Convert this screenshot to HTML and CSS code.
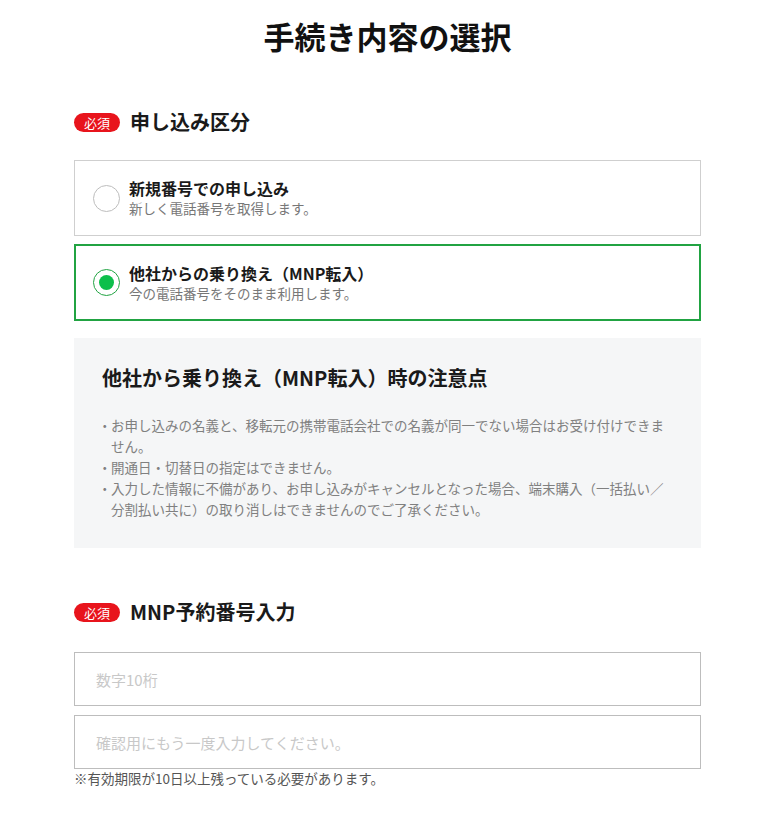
FILE: index.html
```html
<!DOCTYPE html>
<html lang="ja">
<head>
<meta charset="utf-8">
<title>手続き内容の選択</title>
<link rel="stylesheet" href="styles.css">
</head>
<body>
<main class="page">
  <h1 class="page-title">手続き内容の選択</h1>

  <section class="section">
    <h2 class="section-head"><span class="badge">必須</span><span class="section-title">申し込み区分</span></h2>
    <div class="options">
      <label class="option">
        <span class="radio"></span>
        <span class="option-text">
          <span class="option-title">新規番号での申し込み</span>
          <span class="option-sub">新しく電話番号を取得します。</span>
        </span>
      </label>
      <label class="option option-checked">
        <span class="radio radio-checked"><span class="radio-dot"></span></span>
        <span class="option-text">
          <span class="option-title">他社からの乗り換え（MNP転入）</span>
          <span class="option-sub">今の電話番号をそのまま利用します。</span>
        </span>
      </label>
    </div>
    <div class="notice">
      <h3 class="notice-title">他社から乗り換え（MNP転入）時の注意点</h3>
      <ul class="notice-list">
        <li>お申し込みの名義と、移転元の携帯電話会社での名義が同一でない場合はお受け付けできません。</li>
        <li>開通日・切替日の指定はできません。</li>
        <li>入力した情報に不備があり、お申し込みがキャンセルとなった場合、端末購入（一括払い／分割払い共に）の取り消しはできませんのでご了承ください。</li>
      </ul>
    </div>
  </section>

  <section class="section section-mnp">
    <h2 class="section-head"><span class="badge">必須</span><span class="section-title">MNP予約番号入力</span></h2>
    <div class="fields">
      <input class="field" type="text" placeholder="数字10桁">
      <input class="field" type="text" placeholder="確認用にもう一度入力してください。">
    </div>
    <p class="field-note">※有効期限が10日以上残っている必要があります。</p>
  </section>
</main>
</body>
</html>
```

FILE: styles.css
```css
* { box-sizing: border-box; }
html, body { margin: 0; padding: 0; background: #fff; }
body {
  font-family: "Noto Sans CJK JP", "Noto Sans", sans-serif;
  color: #222;
}
.page {
  width: 627px;
  margin-left: 74px;
  padding-top: 16px;
}
.page-title {
  margin: 0;
  text-align: center;
  font-size: 31px;
  line-height: 40px;
  font-weight: 700;
  color: #111;
}
.section { margin-top: 52px; }
.section-mnp { margin-top: 50px; }
.section-head {
  display: flex;
  align-items: center;
  gap: 10px;
  margin: 0;
  height: 28px;
}
.badge {
  display: inline-flex;
  align-items: center;
  justify-content: center;
  width: 46px;
  height: 19px;
  border-radius: 10px;
  background: #e8141c;
  color: #fff;
  font-size: 13px;
  font-weight: 400;
  line-height: 1;
}
.section-title {
  font-size: 20px;
  line-height: 28px;
  font-weight: 700;
  color: #1a1a1a;
}
.options {
  display: flex;
  flex-direction: column;
  gap: 8px;
  margin-top: 24px;
}
.option {
  display: flex;
  align-items: center;
  gap: 9px;
  height: 76px;
  padding: 0 18px;
  border: 1px solid #cfcfcf;
  background: #fff;
}
.option-checked {
  height: 77px;
  padding: 0 17px;
  border: 2px solid #21a342;
}
.radio {
  flex: none;
  width: 27px;
  height: 27px;
  border-radius: 50%;
  border: 1px solid #bdbdbd;
  background: #fff;
  display: flex;
  align-items: center;
  justify-content: center;
}
.radio-checked { border-color: #21a342; }
.radio-dot {
  width: 15px;
  height: 15px;
  border-radius: 50%;
  background: #0dbf4b;
}
.option-text {
  display: flex;
  flex-direction: column;
  gap: 1px;
}
.option-title {
  font-size: 16px;
  line-height: 20px;
  font-weight: 700;
  color: #1a1a1a;
}
.option-sub {
  font-size: 13.5px;
  line-height: 19px;
  color: #777;
}
.notice {
  margin-top: 17px;
  background: #f5f6f7;
  padding: 26px 28px 28px;
}
.notice-title {
  margin: 0;
  font-size: 20px;
  line-height: 28px;
  font-weight: 700;
  color: #1a1a1a;
}
.notice-list {
  list-style: none;
  margin: 23px 0 0;
  padding: 0;
  font-size: 13.5px;
  line-height: 21px;
  color: #808080;
}
.notice-list li { padding-left: 9px; }
.notice-list li::before {
  content: "・";
  display: inline-block;
  width: 13px;
  margin-left: -13px;
}
.fields {
  display: flex;
  flex-direction: column;
  gap: 9px;
  margin-top: 26px;
}
.field {
  display: block;
  width: 100%;
  height: 54px;
  margin: 0;
  padding: 0 21px;
  border: 1px solid #bdbdbd;
  border-radius: 0;
  font-family: "Noto Sans CJK JP", "Noto Sans", sans-serif;
  font-size: 15px;
  color: #222;
  background: #fff;
  outline: none;
}
.field::placeholder { color: #c8c8c8; }
.field-note {
  margin: 0;
  font-size: 13.5px;
  line-height: 19px;
  color: #555;
}
```
